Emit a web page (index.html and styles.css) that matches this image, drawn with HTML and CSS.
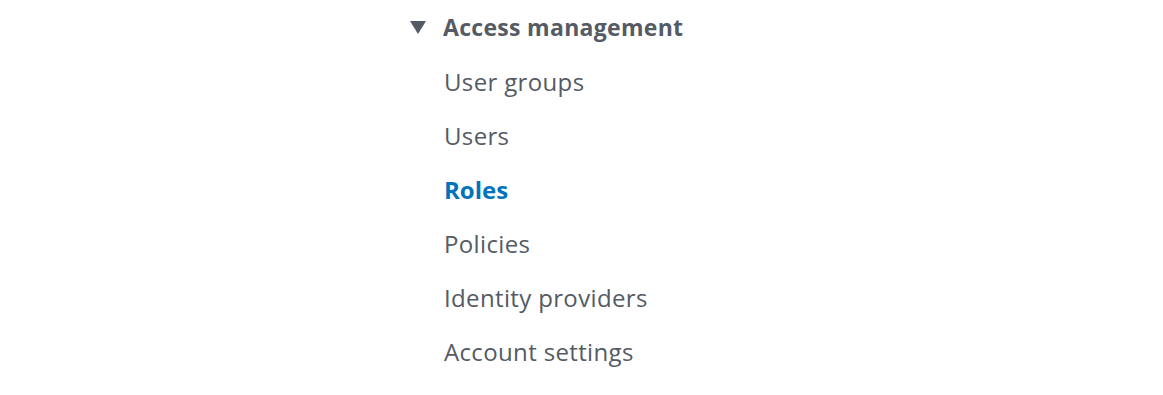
FILE: index.html
```html
<!DOCTYPE html>
<html lang="en">
<head>
    <meta charset="UTF-8">
    <title>Access management</title>
    <link rel="stylesheet" href="styles.css">
</head>
<body>
    <!-- Side navigation section -->
    <nav class="side-nav">
        <div class="nav-section">
            <div class="nav-heading">
                <svg class="caret" width="16" height="13" viewBox="0 0 16 13"><polygon points="0,0 16,0 8,13" fill="currentColor"/></svg>
                <span>Access management</span>
            </div>
            <ul class="nav-list">
                <li><a href="#">User groups</a></li>
                <li><a href="#">Users</a></li>
                <li><a href="#" class="active">Roles</a></li>
                <li><a href="#">Policies</a></li>
                <li><a href="#">Identity providers</a></li>
                <li><a href="#">Account settings</a></li>
            </ul>
        </div>
    </nav>
</body>
</html>
```

FILE: styles.css
```css
:root {
    --text-grey: #545b64;
    --text-heading: #545b64;
    --link-active: #0073bb;
}
body {
    margin: 0;
    background-color: #ffffff;
    font-family: 'Open Sans', Roboto, 'Liberation Sans', sans-serif;
}
.side-nav {
    padding: 0 0 0 410px;
}
.nav-heading {
    display: flex;
    align-items: center;
    height: 54px;
    font-size: 23px;
    font-weight: 700;
    letter-spacing: 0.3px;
    color: var(--text-heading);
}
.caret {
    margin-right: 17px;
}
.nav-list {
    list-style: none;
    margin: 0;
    padding: 0 0 0 34px;
}
.nav-list li {
    height: 54px;
    line-height: 56px;
}
.nav-list a {
    font-size: 24px;
    font-weight: 500;
    letter-spacing: 0.35px;
    color: var(--text-grey);
    text-decoration: none;
}
.nav-list a.active {
    color: var(--link-active);
    font-weight: 700;
    letter-spacing: 0;
}
```
